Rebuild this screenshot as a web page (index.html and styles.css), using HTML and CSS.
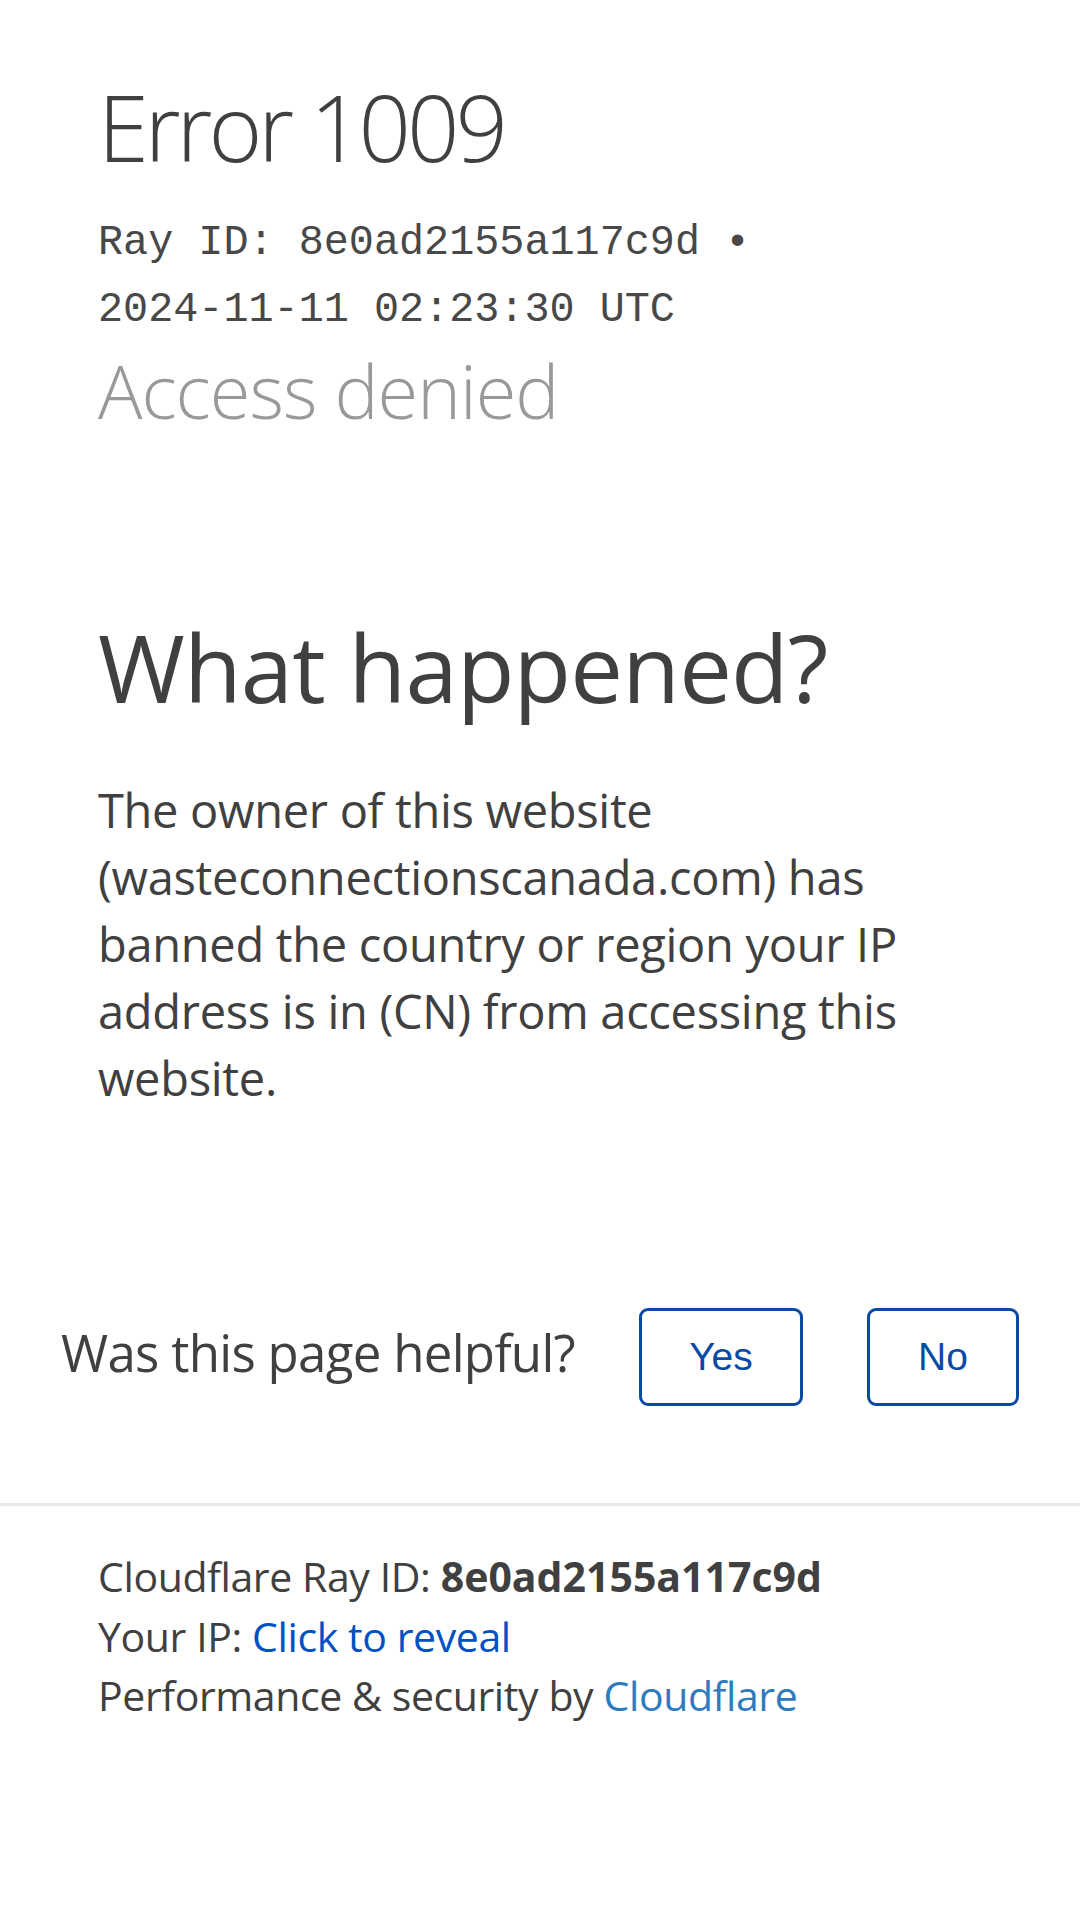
FILE: index.html
```html
<!DOCTYPE html>
<html lang="en">
<head>
<meta charset="utf-8">
<title>Access denied | wasteconnectionscanada.com used Cloudflare to restrict access</title>
<link rel="stylesheet" href="styles.css">
</head>
<body>
<main class="page">
  <header class="header">
    <h1 class="error-title">Error 1009</h1>
    <div class="ray"><span class="ray-part">Ray ID: 8e0ad2155a117c9d &bull;</span> <span class="ray-part">2024-11-11 02:23:30 UTC</span></div>
    <h2 class="subtitle">Access denied</h2>
  </header>

  <section class="what">
    <h2 class="what-title">What happened?</h2>
    <p class="what-text">The owner of this website (wasteconnectionscanada.com) has banned the country or region your IP address is in (CN) from accessing this website.</p>
  </section>

  <section class="feedback">
    <div class="feedback-label">Was this page helpful?</div>
    <button class="fb-btn fb-yes" type="button">Yes</button>
    <button class="fb-btn fb-no" type="button">No</button>
  </section>

  <footer class="footer">
    <div class="footer-line">Cloudflare Ray ID: <strong class="ray-strong">8e0ad2155a117c9d</strong></div>
    <div class="footer-line">Your IP: <a class="reveal" href="#">Click to reveal</a></div>
    <div class="footer-line">Performance &amp; security by <a class="cf-link" href="#">Cloudflare</a></div>
  </footer>
</main>
</body>
</html>
```

FILE: styles.css
```css
html, body {
  margin: 0;
  padding: 0;
  background: #ffffff;
}

body {
  font-family: "Open Sans", "Noto Sans", "Liberation Sans", sans-serif;
  color: #404040;
  width: 1080px;
  min-height: 1920px;
}

.page {
  display: flex;
  flex-direction: column;
}

.header {
  padding: 67px 98px 0 98px;
  display: flex;
  flex-direction: column;
}

.error-title {
  margin: 0;
  font-size: 92px;
  line-height: 120px;
  font-weight: 300;
  color: #404040;
  letter-spacing: -4px;
}

.ray {
  margin-top: 23px;
  font-family: "Liberation Mono", "Courier New", monospace;
  font-size: 41.8px;
  line-height: 67px;
  color: #484848;
}

.ray-part {
  display: inline-block;
}

.subtitle {
  margin: 2px 0 0 0;
  font-size: 74px;
  line-height: 90px;
  font-weight: 300;
  color: #999999;
  letter-spacing: -1px;
}

.what {
  padding: 176px 98px 0 98px;
}

.what-title {
  margin: 0;
  font-size: 94px;
  line-height: 110px;
  font-weight: 400;
  color: #404040;
  letter-spacing: -0.8px;
}

.what-text {
  margin: 55px 0 0 0;
  font-size: 47px;
  line-height: 67px;
  color: #404040;
  letter-spacing: -0.3px;
}

.feedback {
  margin-top: 196px;
  padding-left: 61px;
  display: flex;
  align-items: flex-start;
}

.feedback-label {
  width: 578px;
  padding-top: 11px;
  font-size: 51px;
  line-height: 67px;
  color: #404040;
  letter-spacing: -0.7px;
}

.fb-btn {
  box-sizing: border-box;
  height: 98px;
  border: 3px solid #0a4aa6;
  border-radius: 9px;
  background: #ffffff;
  color: #0a4aa6;
  font-family: "Liberation Sans", Arial, sans-serif;
  font-size: 39px;
  padding: 0;
  margin: 0;
}

.fb-yes {
  width: 164px;
}

.fb-no {
  width: 152px;
  margin-left: 64px;
}

.footer {
  margin-top: 97px;
  border-top: 3px solid #e8e8e8;
  padding: 41px 98px 0 98px;
}

.footer-line {
  font-size: 41px;
  line-height: 59.5px;
  color: #404040;
  letter-spacing: -0.4px;
}

.ray-strong {
  font-weight: 700;
  letter-spacing: 0;
}

.reveal {
  color: #0051c3;
  text-decoration: none;
}

.cf-link {
  color: #2f7bbf;
  text-decoration: none;
}
```
